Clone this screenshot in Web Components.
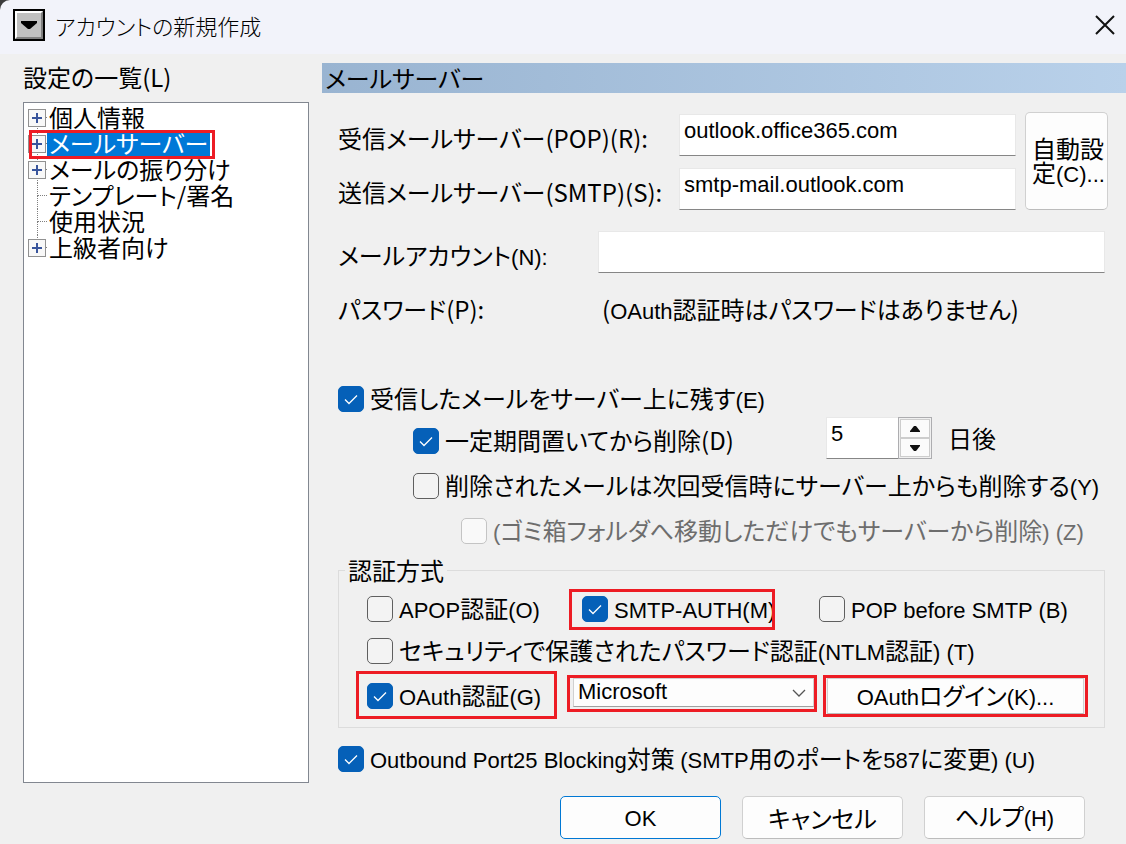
<!DOCTYPE html>
<html lang="ja">
<head>
<meta charset="utf-8">
<meta name="viewport" content="width=device-width, initial-scale=1">
<title>アカウントの新規作成</title>
<style>
  html { background: #3c3c3c; }
  body {
    margin: 0;
    color: #000;
    font-family: "Noto Sans CJK JP", sans-serif;
    font-size: 24px;
    line-height: 24px;
    font-feature-settings: "palt";
  }
</style>
</head>
<body>
<account-dialog></account-dialog>

<script>
const define = (name, markup, setup) => {
  const template = document.createElement('template');
  template.innerHTML = `<style>
    * { box-sizing: border-box; }
    button, input, select { font: inherit; color: inherit; font-feature-settings: inherit; margin: 0; }
    input, select, .latin { font-family: "Liberation Sans", "Noto Sans CJK JP", sans-serif; font-size: 22px; }
  </style>` + markup;
  customElements.define(name, class extends HTMLElement {
    constructor() {
      super();
      this.attachShadow({ mode: 'open' }).append(template.content.cloneNode(true));
    }
    connectedCallback() {
      if (setup) setup(this, this.shadowRoot);
    }
  });
};

/* Window caption with system icon and close button */
define('title-bar', `
  <style>
    :host { display: flex; align-items: center; height: 54px; padding: 0 9px 4px 13px;
      background: #f2f3fa; border-top-left-radius: 10px; }
    .icon { display: block; width: 32px; height: 32px; margin-right: 10px; }
    h1 { flex: 1; margin: 0; font-size: 22px; font-weight: 300; line-height: 32px; }
    button { width: 24px; height: 24px; padding: 0; border: 0; background: none; }
    button svg { display: block; }
  </style>
  <svg class="icon" viewBox="0 0 32 32" aria-hidden="true">
    <rect width="32" height="32" fill="#000"/>
    <rect x="2" y="2" width="28" height="28" fill="#808080"/>
    <path d="M2 2H30L28 4H4V28L2 30Z" fill="#fff"/>
    <rect x="4" y="4" width="24" height="24" fill="#c0c0c0"/>
    <path d="M8 12H24V14L17 20H15L8 14Z" fill="#000"/>
  </svg>
  <h1><slot></slot></h1>
  <button type="button" aria-label="閉じる">
    <svg width="24" height="24" viewBox="0 0 24 24"><path d="M3 3L21 21M21 3L3 21" stroke="#111" stroke-width="2" fill="none"/></svg>
  </button>`);

/* Red frame laid over its content; --top/--right/--bottom/--left set how far it reaches out */
define('red-mark', `
  <style>
    :host { display: block; position: relative; }
    .frame { position: absolute; pointer-events: none; border: 3px solid #ed1c24;
      inset: var(--top, 0) var(--right, 0) var(--bottom, 0) var(--left, 0); }
  </style>
  <slot></slot><span class="frame"></span>`);

define('tree-view', `
  <style>
    :host { display: block; border: 1px solid #828790; background: #fff; padding: 2px 4px; }
  </style>
  <slot></slot>`, el => el.setAttribute('role', 'tree'));

define('tree-item', `
  <style>
    :host { display: flex; height: 26px; }
    .branch { width: 19px; flex: none; }
    .text { padding: 0 2px 2px; line-height: 24px; white-space: nowrap; }
    :host([selected]) .text { background: #0078d7; color: #fff; }
    .box, .up, .down { display: none; }
    :host([expandable]) .box { display: inline; }
    :host(:not([first])) .up { display: inline; }
    :host(:not([last])) .down { display: inline; }
  </style>
  <svg class="branch" width="19" height="26" viewBox="0 0 19 26" aria-hidden="true">
    <g stroke="#808080" stroke-dasharray="1 1">
      <path class="up" d="M9.5 0V13"/><path class="down" d="M9.5 13V26"/><path d="M10 12.5H19"/>
    </g>
    <g class="box">
      <rect x=".5" y="4.5" width="17" height="17" fill="#f8f8f8" stroke="#919191"/>
      <path d="M4 13H14M9 8V18" stroke="#39559c" stroke-width="2"/>
    </g>
  </svg>
  <span class="text"><slot></slot></span>`, el => el.setAttribute('role', 'treeitem'));

define('check-box', `
  <style>
    :host { display: block; }
    label { display: flex; align-items: center; white-space: nowrap; }
    .tick { display: grid; flex: none; margin-right: 6px; }
    .tick > * { grid-area: 1 / 1; }
    .caption { height: 26px; }
    input { appearance: none; width: 26px; height: 26px; border: 1px solid #5f5f5f; border-radius: 5px; background: #f3f3f3; }
    svg { pointer-events: none; visibility: hidden; }
    input:checked { background: #0560b8; border-color: #0560b8; }
    input:checked + svg { visibility: visible; }
    input:disabled { border-color: #c4c4c4; background: #f9f9f9; }
    :host([disabled]) { color: #6d6d6d; }
  </style>
  <label><span class="tick"><input type="checkbox">
    <svg width="26" height="26" viewBox="0 0 26 26" aria-hidden="true"><path d="M7 13.5L11 17.5L19 9.5" fill="none" stroke="#fff" stroke-width="1.3"/></svg>
  </span><span class="caption"><slot></slot></span></label>`, (el, root) => {
    const input = root.querySelector('input');
    input.checked = el.hasAttribute('checked');
    input.disabled = el.hasAttribute('disabled');
  });

define('text-field', `
  <style>
    :host { display: flex; height: 42px; }
    label { flex: none; width: var(--label-width, 260px); padding-top: 12px; white-space: nowrap; }
    input { flex: 1; min-width: 0; width: 100%; padding: 0 4px 8px; border: 1px solid #e8e8e8; border-bottom-color: #868686; border-radius: 0; background: #fff; }
  </style>
  <label for="field"><slot></slot></label><input id="field" type="text">`,
  (el, root) => { root.querySelector('input').value = el.getAttribute('value') || ''; });

define('push-button', `
  <style>
    :host { display: block; }
    button { width: 100%; height: 100%; padding: 0 4px; border: 1px solid #d0d0d0; border-bottom-color: #bcbcbc; border-radius: 5px; background: #fdfdfd; }
    :host([default]) button { border-color: #0078d4; }
    :host([wide]) button { border-radius: 0; }
    :host([wrap]) button { text-align: left; padding: 0 2px 0 6px; }
  </style>
  <button type="button"><slot></slot></button>`);

define('number-spinner', `
  <style>
    :host { display: flex; width: 106px; height: 42px; }
    input { appearance: textfield; width: 72px; padding: 0 4px 8px; border: solid #e8e8e8; border-width: 1px 0 1px 1px; border-bottom-color: #868686; border-radius: 0; background: #fff; }
    input::-webkit-inner-spin-button { appearance: none; }
    .steps { flex: 1; display: grid; grid-template-rows: 1fr 1fr; padding: 1px; border: 1px solid #adadb0; background: #f0f0f0; }
    button { display: grid; place-items: center; padding: 0; border: 1px solid #cdcdcd; background: #fbfbfb; }
  </style>
  <input type="number" aria-label="日数">
  <span class="steps">
    <button type="button" aria-label="増やす"><svg width="12" height="8" viewBox="0 0 12 8"><path d="M1 7V6L5 1H7L11 6V7Z" fill="#111"/></svg></button>
    <button type="button" aria-label="減らす"><svg width="12" height="8" viewBox="0 0 12 8"><path d="M1 1V2L5 7H7L11 2V1Z" fill="#111"/></svg></button>
  </span>`, (el, root) => {
    const input = root.querySelector('input');
    const [up, down] = root.querySelectorAll('button');
    input.value = el.getAttribute('value');
    up.onclick = () => input.stepUp();
    down.onclick = () => input.stepDown();
  });

define('drop-down', `
  <style>
    :host { display: grid; align-items: center; }
    select, svg { grid-area: 1 / 1; }
    select { appearance: none; width: 100%; height: 100%; padding: 0 4px 2px; border: 1px solid #d0d0d0; border-bottom-color: #a0a0a0; border-radius: 0; background: #fdfdfd; }
    svg { justify-self: end; margin-right: 8px; pointer-events: none; }
  </style>
  <select aria-label="OAuthプロバイダー"><option>Microsoft</option></select>
  <svg width="14" height="8" viewBox="0 0 14 8" aria-hidden="true"><path d="M1 1L7 7L13 1" fill="none" stroke="#555" stroke-width="1.3"/></svg>`);

define('group-box', `
  <style>
    :host { display: block; }
    fieldset { margin: 0; padding: 14px 16px 13px 28px; border: 1px solid #dcdcdc; min-width: 0; }
    legend { height: 24px; margin-left: -22px; padding: 0 3px; }
  </style>
  <fieldset><legend><slot name="legend"></slot></legend><slot></slot></fieldset>`);

define('account-dialog', `
  <style>
    :host { display: flex; flex-direction: column; min-height: 100vh; }
    main { flex: 1; display: grid; grid-template-columns: 286px minmax(0, 1fr); column-gap: 13px; padding-left: 23px; background: #f0f0f0; }
    nav { display: flex; flex-direction: column; padding-top: 11px; }
    nav > span { margin-bottom: 13px; }
    tree-view { flex: 1; }
    h2 { margin: 9px 0 19px; padding: 0 3px; font-size: 24px; font-weight: 400; line-height: 30px; background: linear-gradient(90deg, #99b4d1, #b9d1ea); }
    form { padding: 0 21px 11px 16px; }
    .servers { display: grid; grid-template-columns: 1fr 83px; column-gap: 9px; margin-right: -3px; --label-width: 341px; }
    .fields { display: grid; row-gap: 12px; padding-top: 2px; }
    .account { margin-top: 21px; }
    .password { display: flex; height: 42px; margin-top: 12px; padding-top: 12px; }
    .password > span:first-child { width: 264px; }
    .keep { margin-top: 59px; }
    .period { display: flex; align-items: center; margin: 5px 0 14px 75px; }
    .period check-box { width: 413px; padding-top: 6px; }
    .period number-spinner { margin-right: 16px; }
    .deleted { margin-left: 75px; }
    .trash { margin: 19px 0 14px 123px; }
    .methods { display: grid; grid-template-columns: 215px 237px 1fr; row-gap: 16px; }
    .ntlm { grid-column: 1 / -1; }
    .oauth { display: grid; grid-template-columns: 193px 241px 257px; column-gap: 13px; align-items: center; height: 36px; margin-top: 14px; }
    .m-tree { --left: 1px; --top: -1px; --bottom: -2px; --right: -5px; width: max-content; }
    .m-smtp { --left: -13px; --right: 44px; --top: -7px; --bottom: -8px; }
    .m-oauth { --left: -11px; --right: 3px; --top: -12px; --bottom: -10px; }
    .m-select { --left: -6px; --right: -3px; --top: -3px; --bottom: -5px; align-self: start; }
    .m-select drop-down { height: 29px; }
    .m-login { --left: -4px; --right: -4px; --top: -3px; --bottom: -3px; }
    .m-login push-button { height: 36px; }
    .port { margin-top: 18px; }
    footer { display: flex; justify-content: flex-end; gap: 21px; padding: 13px 41px 5px; background: #f0f0f0; }
    footer push-button { width: 161px; height: 43px; }
  </style>
  <title-bar>アカウントの新規作成</title-bar>
  <main>
    <nav>
      <span>設定の一覧(L)</span>
      <tree-view aria-label="設定の一覧">
        <tree-item expandable first>個人情報</tree-item>
        <red-mark class="m-tree"><tree-item expandable selected>メールサーバー</tree-item></red-mark>
        <tree-item expandable>メールの振り分け</tree-item>
        <tree-item>テンプレート/署名</tree-item>
        <tree-item>使用状況</tree-item>
        <tree-item expandable last>上級者向け</tree-item>
      </tree-view>
    </nav>
    <section>
      <h2>メールサーバー</h2>
      <form>
        <div class="servers">
          <div class="fields">
            <text-field value="outlook.office365.com">受信メールサーバー(POP)(R):</text-field>
            <text-field value="smtp-mail.outlook.com">送信メールサーバー(SMTP)(S):</text-field>
          </div>
          <push-button wrap>自動設定<span class="latin">(C)...</span></push-button>
        </div>
        <text-field class="account">メールアカウント<span class="latin">(N):</span></text-field>
        <div class="password"><span>パスワード(P):</span><span>(<span class="latin">OAuth</span>認証時はパスワードはありません)</span></div>
        <check-box class="keep" checked>受信したメールをサーバー上に残す<span class="latin">(E)</span></check-box>
        <div class="period">
          <check-box checked>一定期間置いてから削除(D)</check-box>
          <number-spinner value="5"></number-spinner><span>日後</span>
        </div>
        <check-box class="deleted">削除されたメールは次回受信時にサーバー上からも削除する<span class="latin">(Y)</span></check-box>
        <check-box class="trash" disabled><span class="latin">(</span>ゴミ箱フォルダへ移動しただけでもサーバーから削除<span class="latin">) (Z)</span></check-box>
        <group-box>
          <span slot="legend">認証方式</span>
          <div class="methods">
            <check-box><span class="latin">APOP</span>認証<span class="latin">(O)</span></check-box>
            <red-mark class="m-smtp"><check-box checked><span class="latin">SMTP-AUTH(M)</span></check-box></red-mark>
            <check-box><span class="latin">POP before SMTP (B)</span></check-box>
            <check-box class="ntlm">セキュリティで保護されたパスワード認証<span class="latin">(NTLM</span>認証<span class="latin">) (T)</span></check-box>
          </div>
          <div class="oauth">
            <red-mark class="m-oauth"><check-box checked><span class="latin">OAuth</span>認証<span class="latin">(G)</span></check-box></red-mark>
            <red-mark class="m-select"><drop-down></drop-down></red-mark>
            <red-mark class="m-login"><push-button wide><span class="latin">OAuth</span>ログイン<span class="latin">(K)...</span></push-button></red-mark>
          </div>
        </group-box>
        <check-box class="port" checked><span class="latin">Outbound Port25 Blocking</span>対策 <span class="latin">(SMTP</span>用のポートを<span class="latin">587</span>に変更<span class="latin">) (U)</span></check-box>
      </form>
    </section>
  </main>
  <footer>
    <push-button default><span class="latin">OK</span></push-button>
    <push-button>キャンセル</push-button>
    <push-button>ヘルプ<span class="latin">(H)</span></push-button>
  </footer>`);
</script>
</body>
</html>
